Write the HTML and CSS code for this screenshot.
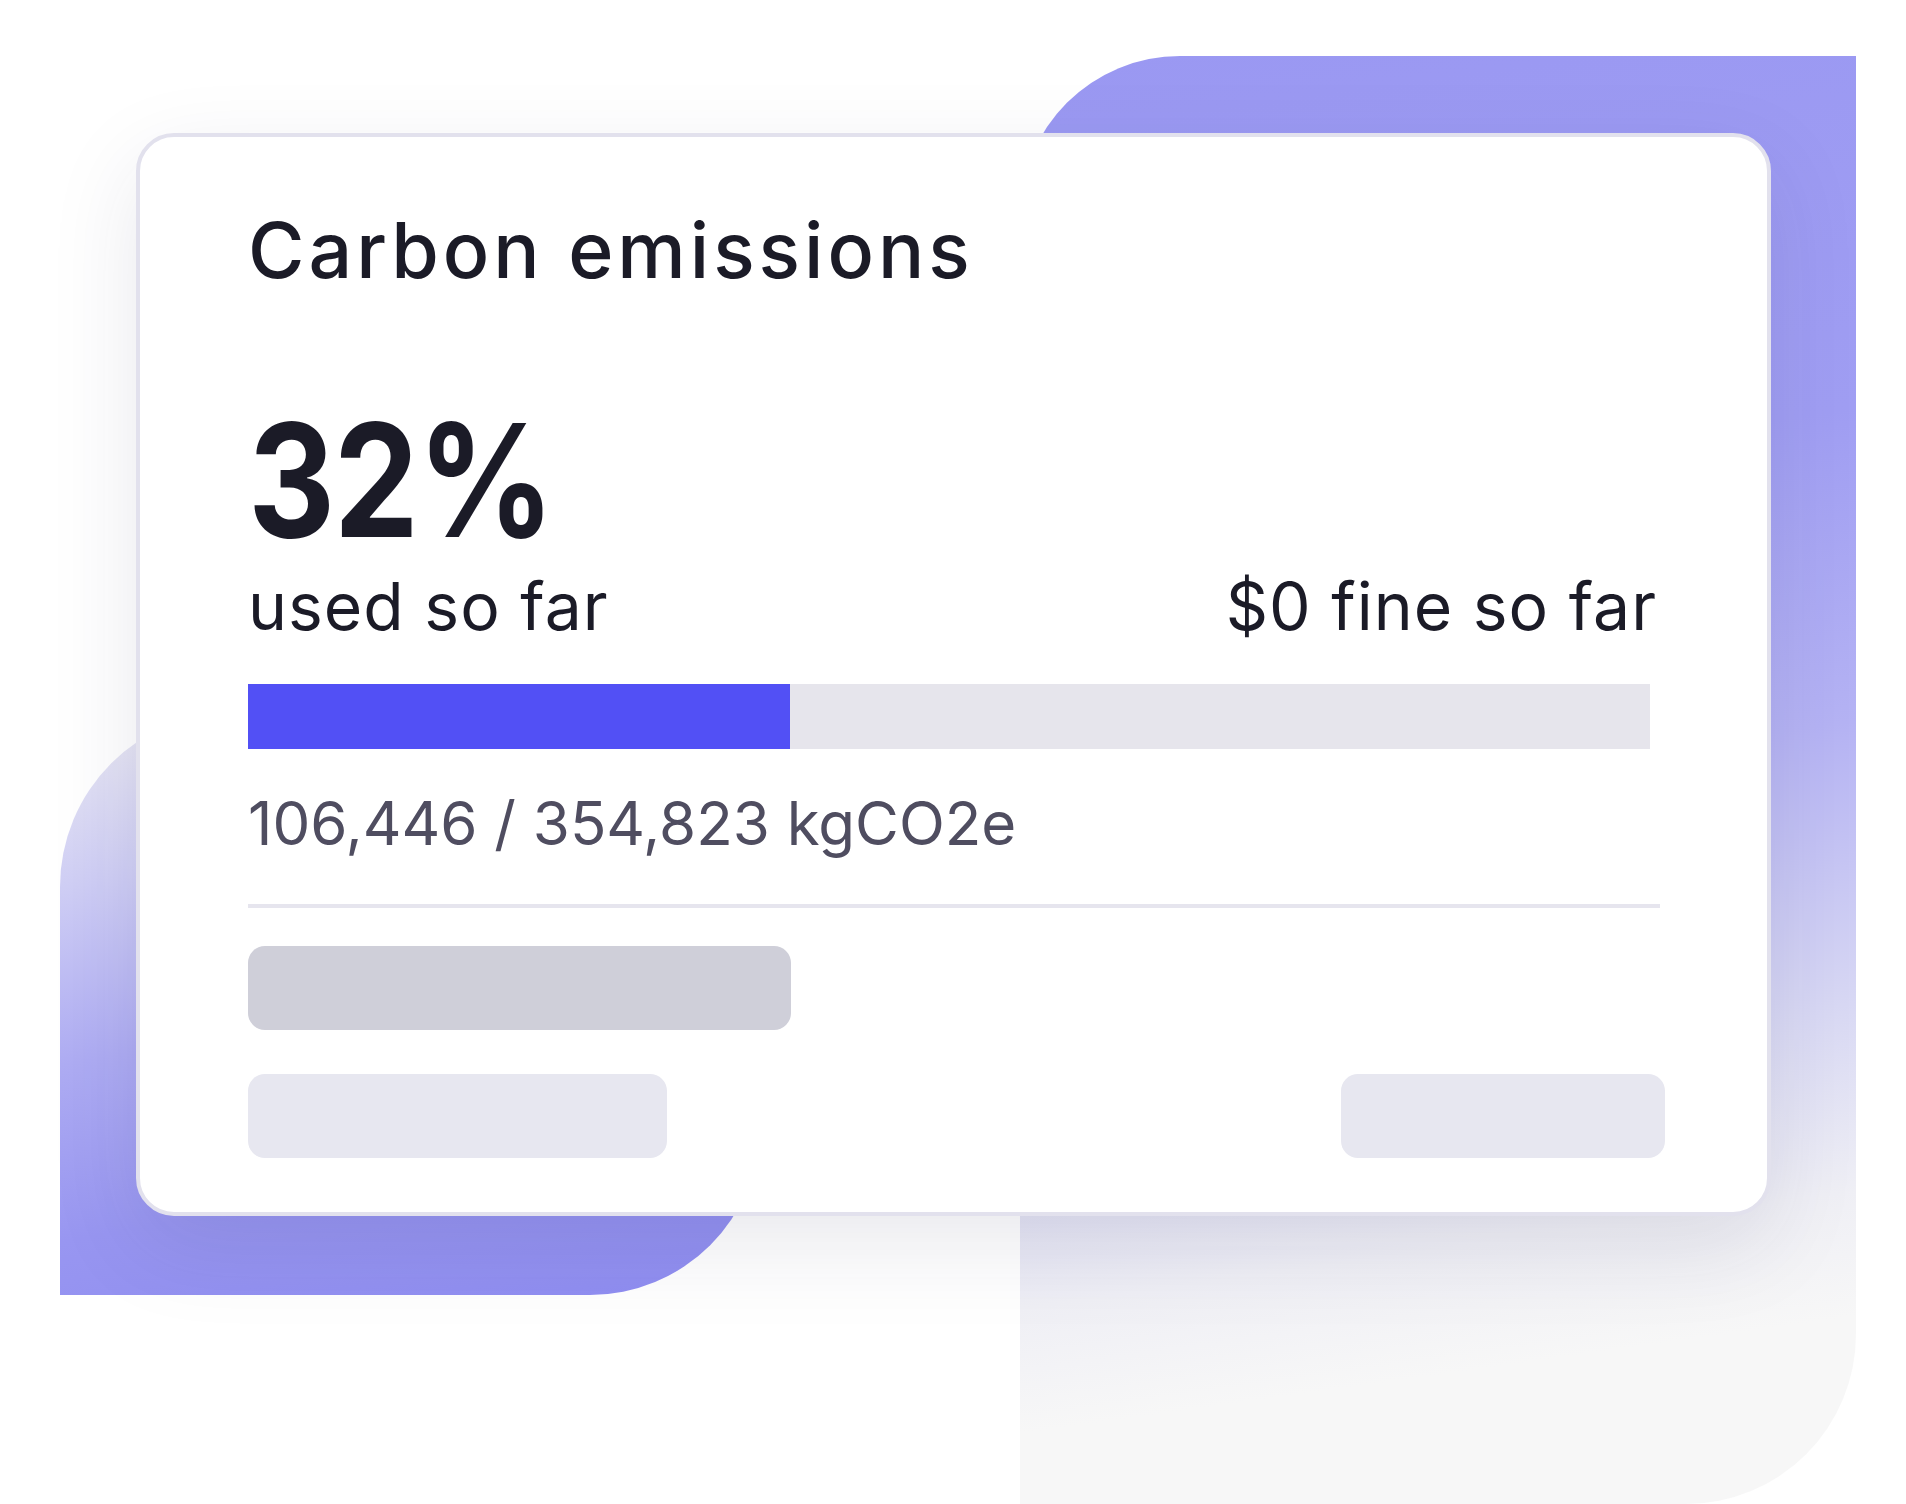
FILE: index.html
```html
<!DOCTYPE html>
<html lang="en">
<head>
<meta charset="utf-8">
<title>Carbon emissions</title>
<link rel="stylesheet" href="styles.css">
</head>
<body>
<div class="stage">
  <div class="blob blob-right"></div>
  <div class="blob blob-left"></div>
  <section class="card">
    <h1 class="title">Carbon emissions</h1>
    <div class="big"><span class="big-num">32%</span></div>
    <div class="row">
      <span>used so far</span>
      <span>$0 fine so far</span>
    </div>
    <div class="bar"><div class="bar-fill" style="width: 38.66%"></div></div>
    <div class="amount">106,446 / 354,823 kgCO2e</div>
    <div class="divider"></div>
    <div class="skel skel-dark"></div>
    <div class="skel-row">
      <div class="skel skel-a"></div>
      <div class="skel skel-b"></div>
    </div>
  </section>
</div>
</body>
</html>
```
FILE: styles.css
```css
* { box-sizing: border-box; }
html, body { margin: 0; padding: 0; background: #ffffff; }
body { font-family: "Inter", "Noto Sans", sans-serif; color: #1b1b27; }

.stage {
  position: relative;
  width: 1906px;
  height: 1504px;
  overflow: hidden;
  padding-top: 133px;
  padding-left: 136px;
}

.blob { position: absolute; }
.blob-right {
  left: 1020px;
  top: 56px;
  width: 836px;
  height: 1448px;
  border-radius: 160px 0 170px 0;
  background: linear-gradient(172deg, #9a98f2 0%, #a09ef3 30%, #b5b3f4 50%, #d8d8f4 68%, #efeff5 80%, #f7f7f7 88%, #f7f7f7 100%);
}
.blob-left {
  left: 60px;
  top: 712px;
  width: 700px;
  height: 583px;
  border-radius: 175px 0 170px 0;
  background: linear-gradient(170deg, #ecebf3 0%, #cfcef5 25%, #aeacf3 50%, #9896f1 75%, #8f8df1 100%);
}

.card {
  position: relative;
  width: 1635px;
  height: 1083px;
  background: #ffffff;
  border: 4px solid #e2e1ed;
  border-radius: 38px;
  box-shadow: 0 30px 90px rgba(40, 40, 80, 0.10);
  padding: 74.5px 102px 0 108px;
  display: flex;
  flex-direction: column;
}

.title {
  margin: 0;
  font-size: 77px;
  line-height: 1;
  font-weight: 500;
  letter-spacing: 4px;
  color: #1b1b27;
}

.big {
  margin-top: 113px;
  height: 157px;
  font-size: 157px;
  line-height: 1;
  font-weight: 700;
  color: #1b1b27;
}
.big-num {
  display: inline-block;
  letter-spacing: -0.01em;
  transform: scaleX(0.86);
  transform-origin: 0 50%;
}

.row {
  margin-top: 14.6px;
  margin-right: 8px;
  display: flex;
  justify-content: space-between;
  font-size: 66px;
  line-height: 1;
  font-weight: 400;
  letter-spacing: 1px;
  color: #1b1b27;
}

.bar {
  margin-top: 44.5px;
  width: 1402px;
  height: 65.5px;
  background: #e6e5ec;
  display: flex;
}
.bar-fill { height: 100%; background: #5250f5; }

.amount {
  margin-top: 44.2px;
  font-size: 60px;
  line-height: 1;
  font-weight: 400;
  color: #4f4d60;
}

.divider {
  margin-top: 50.8px;
  margin-right: 5px;
  height: 4px;
  background: #e6e5ee;
}

.skel { height: 84px; border-radius: 17px; }
.skel-dark {
  margin-top: 38px;
  width: 543px;
  background: #cfcfd9;
}
.skel-row {
  margin-top: 44px;
  display: flex;
  justify-content: space-between;
}
.skel-a { width: 419px; background: #e7e7f0; }
.skel-b { width: 324px; background: #e7e7f0; }
```
